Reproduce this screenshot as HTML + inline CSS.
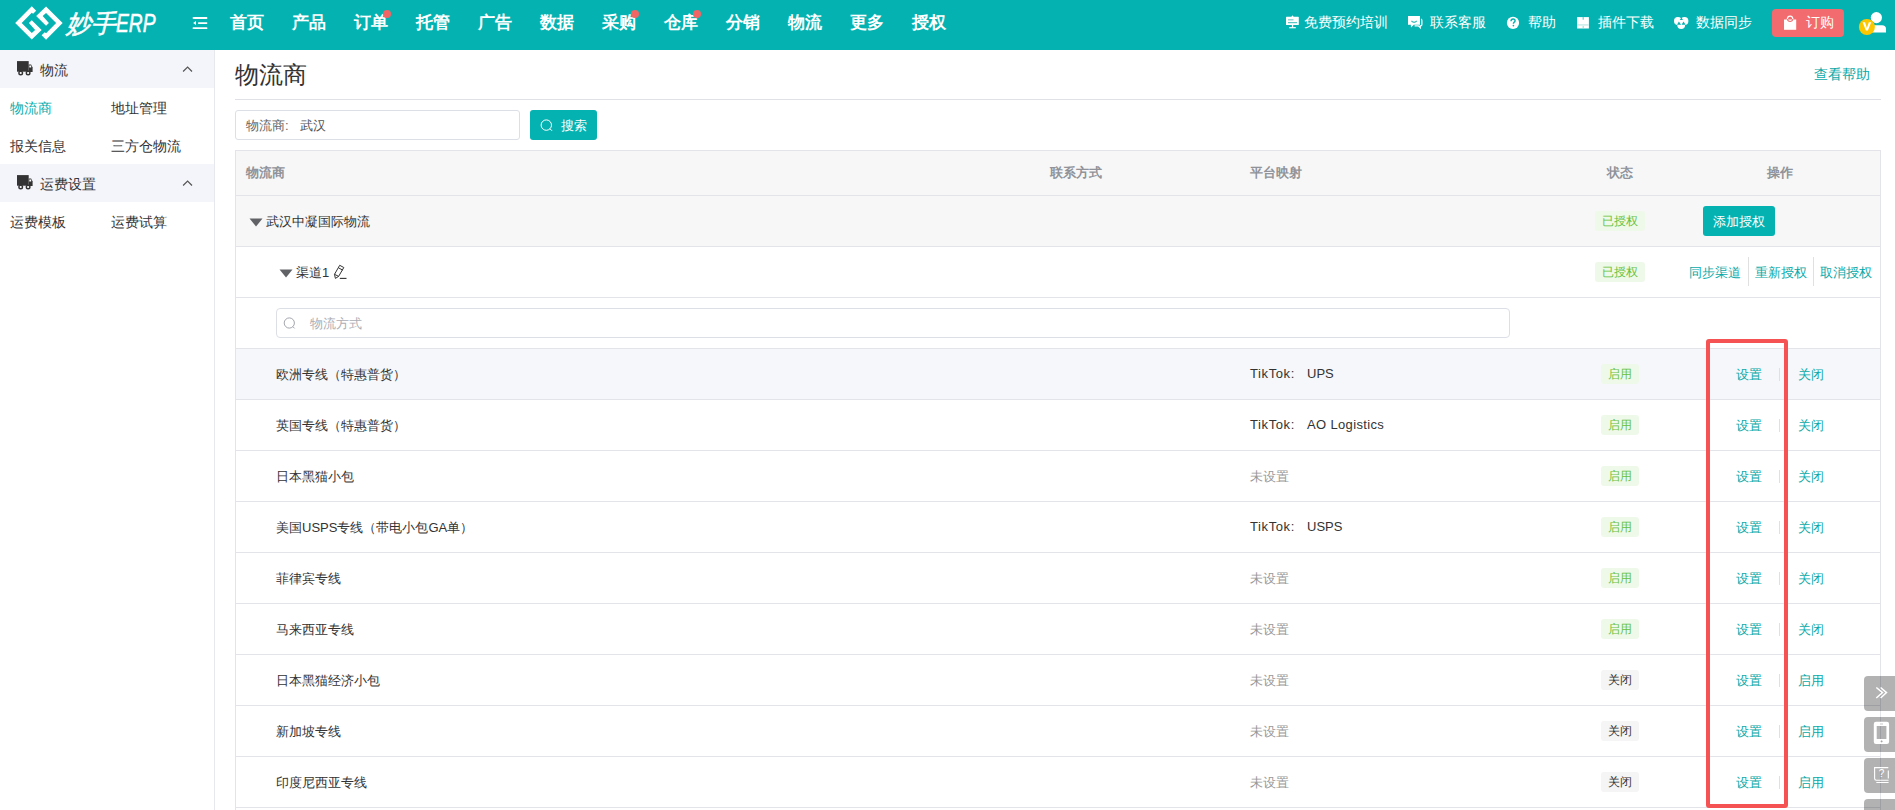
<!DOCTYPE html>
<html><head><meta charset="utf-8">
<style>
*{box-sizing:border-box;margin:0;padding:0}
html,body{width:1895px;height:810px;overflow:hidden;background:#fff;font-family:"Liberation Sans",sans-serif;color:#333;font-size:13px}
.abs{position:absolute}
#hdr{position:absolute;left:0;top:0;width:1895px;height:50px;background:#04B3B1}
.nav{position:absolute;top:0;height:50px;line-height:46px;font-size:17px;font-weight:bold;color:#fff;white-space:nowrap}
.dot{position:absolute;width:8px;height:8px;border-radius:50%;background:#F26565}
.hr{position:absolute;top:0;height:46px;line-height:44px;font-size:14px;color:#fff;white-space:nowrap}
#side svg{z-index:2}
#side{position:absolute;left:0;top:50px;width:215px;height:760px;background:#fff;border-right:1px solid #E6E8EE}
.sh{position:absolute;left:0;width:214px;background:#F4F5FA;font-size:14px;color:#333}
.si{position:absolute;font-size:14px;color:#333;white-space:nowrap}
.t{position:absolute;white-space:nowrap}
.row{position:absolute;left:235px;width:1646px;border-left:1px solid #E4E6EC;border-right:1px solid #E4E6EC;border-bottom:1px solid #E4E6EC}
.tag{position:absolute;height:21px;line-height:21px;font-size:12px;border-radius:3px;text-align:center}
.tg{background:#EFF9EA;color:#67C23A}
.tc{background:#F5F5F5;color:#333}
.th{font-weight:bold;color:#909399}
.lnk{position:absolute;color:#09A9A8;font-size:13px;white-space:nowrap}
.sep{position:absolute;width:1px;height:14px;background:#E0E0E0}
</style></head><body>
<div id="hdr">
  <svg class="abs" style="left:0;top:0" width="70" height="50" viewBox="0 0 70 50">
    <g fill="#fff">
      <polygon id="lg" points="31.78,6.15 36.19,10.82 33.08,13.83 31.78,12.63 21.67,23.01 31.78,33.12 35.16,30 28.93,23.01 31.78,20.15 41.64,30 31.78,39.6 15.19,23.01"/>
      <polygon transform="rotate(180 38.915 23)" points="31.78,6.15 36.19,10.82 33.08,13.83 31.78,12.63 21.67,23.01 31.78,33.12 35.16,30 28.93,23.01 31.78,20.15 41.64,30 31.78,39.6 15.19,23.01"/>
    </g>
  </svg>
  <div class="t" style="left:66px;top:6px;font-size:25px;font-style:italic;color:#fff;-webkit-text-stroke:0.5px #fff;line-height:34px">妙手<span style="display:inline-block;transform:scaleX(0.77);transform-origin:0 50%">ERP</span></div>
  <svg class="abs" style="left:190px;top:14px" width="20" height="18" viewBox="0 0 20 18">
    <rect x="2.6" y="3.1" width="14.8" height="1.9" rx="0.9" fill="#fff"/>
    <rect x="7.9" y="8.2" width="9.5" height="1.8" rx="0.9" fill="#fff"/>
    <polygon points="3.1,9.1 6,7.1 6,11.1" fill="#fff"/>
    <rect x="2.6" y="13.2" width="14.8" height="1.9" rx="0.9" fill="#fff"/>
  </svg>
  <div class="nav" style="left:230px">首页</div>
  <div class="nav" style="left:292px">产品</div>
  <div class="nav" style="left:354px">订单</div><div class="dot" style="left:383px;top:10px"></div>
  <div class="nav" style="left:416px">托管</div>
  <div class="nav" style="left:478px">广告</div>
  <div class="nav" style="left:540px">数据</div>
  <div class="nav" style="left:602px">采购</div><div class="dot" style="left:631px;top:10px"></div>
  <div class="nav" style="left:664px">仓库</div><div class="dot" style="left:693px;top:10px"></div>
  <div class="nav" style="left:726px">分销</div>
  <div class="nav" style="left:788px">物流</div>
  <div class="nav" style="left:850px">更多</div>
  <div class="nav" style="left:912px">授权</div>


  <svg class="abs" style="left:1284px;top:14px" width="17" height="16" viewBox="1284 14 17 16">
    <rect x="1286" y="16.8" width="12.8" height="8.2" rx="0.6" fill="#fff"/>
    <path d="M1291.3,17 L1292.5,15.2 L1293.7,17 Z" fill="#fff"/>
    <rect x="1288" y="19.2" width="5.5" height="1.2" fill="#7FCFCD"/>
    <rect x="1288" y="22" width="9" height="1.2" fill="#5CC4C2"/>
    <rect x="1291.9" y="24.8" width="1.3" height="2.8" fill="#fff"/>
    <rect x="1289.2" y="27.1" width="6.6" height="1.2" fill="#fff"/>
  </svg>
  <svg class="abs" style="left:1405px;top:14px" width="20" height="16" viewBox="1405 14 20 16">
    <path d="M1421,19.2 Q1421.9,19.4 1421.9,20.6 V24.6 Q1421.9,25.9 1420.6,25.9 H1420.2 L1420.3,27.8 L1418.3,25.9 H1414.6" fill="none" stroke="#fff" stroke-width="1.2"/>
    <path d="M1408,16.1 H1420 V24.8 H1413.8 L1411,27.6 L1410.8,24.8 H1408 Z" fill="#fff"/>
    <path d="M1411.4,21 Q1414.1,23.6 1416.8,21" fill="none" stroke="#3DBDBB" stroke-width="1.1"/>
  </svg>
  <svg class="abs" style="left:1505px;top:15px" width="16" height="16" viewBox="1505 15 16 16">
    <circle cx="1513" cy="22.9" r="6.1" fill="#fff"/>
    <path d="M1511,21.2 C1511,19.6 1512,19 1513.1,19 C1514.3,19 1515.1,19.8 1515.1,20.8 C1515.1,22 1513.4,22.2 1513.4,23.8" fill="none" stroke="#04B3B1" stroke-width="1.4"/>
    <circle cx="1513.4" cy="25.6" r="0.85" fill="#04B3B1"/>
  </svg>
  <svg class="abs" style="left:1575px;top:15px" width="16" height="16" viewBox="1575 15 16 16">
    <rect x="1577.1" y="17.1" width="11.8" height="11.4" fill="#fff"/>
    <rect x="1577.1" y="24.1" width="11.8" height="1.6" fill="#CDEDEC"/>
    <rect x="1582.7" y="17.1" width="0.9" height="2.6" fill="#38BEBC"/>
    <rect x="1582.7" y="26.2" width="0.9" height="1.6" fill="#60CCCA"/>
  </svg>
  <svg class="abs" style="left:1672px;top:14px" width="19" height="17" viewBox="1672 14 19 17">
    <circle cx="1677.9" cy="21" r="3.9" fill="#fff"/>
    <circle cx="1684.5" cy="21" r="3.9" fill="#fff"/>
    <circle cx="1681.2" cy="25.1" r="3.9" fill="#fff"/>
    <path d="M1681.4,17.6 L1683,20.1 H1679.8 Z M1678.9,21.4 L1681.1,24.7 H1677 Z M1683.6,21.4 L1685.5,24.7 H1681.5 Z" fill="#04B3B1"/>
  </svg>
  
  <svg class="abs" style="left:1856px;top:8px" width="36" height="34" viewBox="1856 8 36 34">
    <circle cx="1876.4" cy="17.6" r="5.6" fill="#fff"/>
    <path d="M1871,32.4 V27.5 C1871,26 1872,25.2 1874,25.2 H1882 C1884.5,25.2 1886,26.6 1886,28.8 V32.4 Z" fill="#fff"/>
    <circle cx="1866.9" cy="27" r="8" fill="#FDC700"/>
    <polygon points="1862.6,22.2 1865,22.2 1866.9,28 1868.8,22.2 1871.2,22.2 1867.9,30.6 1865.9,30.6" fill="#fff"/>
  </svg>
  <div class="hr" style="left:1304px">免费预约培训</div>
  <div class="hr" style="left:1430px">联系客服</div>
  <div class="hr" style="left:1528px">帮助</div>
  <div class="hr" style="left:1598px">插件下载</div>
  <div class="hr" style="left:1696px">数据同步</div>
  <div class="abs" style="left:1772px;top:9px;width:72px;height:28px;background:#F26B6E;border-radius:4px"></div>
  <svg class="abs" style="left:1782px;top:14px" width="16" height="17" viewBox="1782 14 16 17">
    <path d="M1784,19.5 H1796.2 V29.8 H1784 Z" fill="#fff"/>
    <path d="M1787.3,19.8 C1787.3,15 1792.9,15 1792.9,19.8" fill="none" stroke="#fff" stroke-width="1.3"/>
    <path d="M1787.4,19.2 C1788,22.3 1792.2,22.3 1792.8,19.2" fill="none" stroke="#F26D6F" stroke-width="1.1"/>
  </svg>
  <div class="hr" style="left:1806px;line-height:44px">订购</div>
</div>

<div id="side">
  <div class="sh" style="top:0;height:38px"></div>

  <svg class="abs" style="left:15px;top:10px" width="20" height="17" viewBox="15 60 20 17">
    <rect x="17" y="61.1" width="11.7" height="10.6" fill="#333"/>
    <path d="M28.7,64.6 H31.1 L32.6,67.6 V72 H28.7 Z" fill="#333"/>
    <rect x="29.3" y="65.5" width="1.9" height="2" fill="#fff"/>
    <circle cx="20.7" cy="73" r="2.5" fill="#333"/><circle cx="20.7" cy="73" r="1.1" fill="#fff"/>
    <circle cx="28.1" cy="73" r="2.5" fill="#333"/><circle cx="28.1" cy="73" r="1.1" fill="#fff"/>
  </svg>
  <svg class="abs" style="left:180px;top:12px" width="16" height="12" viewBox="180 62 16 12">
    <path d="M183.1,71.5 L187.6,67 L192,71.5" fill="none" stroke="#555" stroke-width="1.2"/>
  </svg>
  <svg class="abs" style="left:15px;top:124px" width="20" height="17" viewBox="15 60 20 17">
    <rect x="17" y="61.1" width="11.7" height="10.6" fill="#333"/>
    <path d="M28.7,64.6 H31.1 L32.6,67.6 V72 H28.7 Z" fill="#333"/>
    <rect x="29.3" y="65.5" width="1.9" height="2" fill="#fff"/>
    <circle cx="20.7" cy="73" r="2.5" fill="#333"/><circle cx="20.7" cy="73" r="1.1" fill="#fff"/>
    <circle cx="28.1" cy="73" r="2.5" fill="#333"/><circle cx="28.1" cy="73" r="1.1" fill="#fff"/>
  </svg>
  <svg class="abs" style="left:180px;top:126px" width="16" height="12" viewBox="180 62 16 12">
    <path d="M183.1,71.5 L187.6,67 L192,71.5" fill="none" stroke="#555" stroke-width="1.2"/>
  </svg>
  <div class="si" style="left:40px;top:12px">物流</div>
  <div class="si" style="left:10px;top:50px;color:#0AAEAE">物流商</div>
  <div class="si" style="left:111px;top:50px">地址管理</div>
  <div class="si" style="left:10px;top:88px">报关信息</div>
  <div class="si" style="left:111px;top:88px">三方仓物流</div>
  <div class="sh" style="top:114px;height:38px"></div>
  <div class="si" style="left:40px;top:126px">运费设置</div>
  <div class="si" style="left:10px;top:164px">运费模板</div>
  <div class="si" style="left:111px;top:164px">运费试算</div>
</div>

<div class="t" style="left:235px;top:59px;font-size:24px;color:#333">物流商</div>
<div class="lnk" style="left:1814px;top:66px;font-size:14px">查看帮助</div>
<div class="abs" style="left:235px;top:99px;width:1646px;height:1px;background:#DFE1E6"></div>
<div class="abs" style="left:235px;top:110px;width:285px;height:30px;border:1px solid #DCDFE6;border-radius:3px"></div>
<div class="t" style="left:246px;top:117px;color:#666">物流商:</div><div class="t" style="left:300px;top:117px;color:#555">武汉</div>
<div class="abs" style="left:530px;top:110px;width:67px;height:30px;background:#04B3B1;border-radius:3px"></div>
<svg class="abs" style="left:538px;top:117px" width="16" height="16" viewBox="538 117 16 16"><circle cx="546.3" cy="125.1" r="5.2" fill="none" stroke="#fff" stroke-width="1"/><path d="M549.9,128.7 L552,130.8" stroke="#fff" stroke-width="1"/></svg>
<div class="t" style="left:561px;top:117px;color:#fff">搜索</div>

<!-- table -->
<div class="abs" style="left:235px;top:150px;width:1646px;height:46px;background:#F7F7F7"></div>
<div class="abs" style="left:235px;top:196px;width:1646px;height:50px;background:#F7F7F7"></div>
<div class="abs" style="left:235px;top:348px;width:1646px;height:51px;background:#F5F7FA"></div>
<div class="abs" style="left:235px;top:150px;width:1px;height:660px;background:#E2E4EA"></div>
<div class="abs" style="left:1880px;top:150px;width:1px;height:660px;background:#E2E4EA"></div>
<div class="abs" style="left:235px;top:150px;width:1646px;height:1px;background:#E2E4EA"></div>
<div class="abs" style="left:235px;top:195px;width:1646px;height:1px;background:#E2E4EA"></div>
<div class="abs" style="left:235px;top:246px;width:1646px;height:1px;background:#E2E4EA"></div>
<div class="abs" style="left:235px;top:297px;width:1646px;height:1px;background:#E2E4EA"></div>
<div class="abs" style="left:235px;top:348px;width:1646px;height:1px;background:#E2E4EA"></div>
<div class="abs" style="left:235px;top:399px;width:1646px;height:1px;background:#E2E4EA"></div>
<div class="abs" style="left:235px;top:450px;width:1646px;height:1px;background:#E2E4EA"></div>
<div class="abs" style="left:235px;top:501px;width:1646px;height:1px;background:#E2E4EA"></div>
<div class="abs" style="left:235px;top:552px;width:1646px;height:1px;background:#E2E4EA"></div>
<div class="abs" style="left:235px;top:603px;width:1646px;height:1px;background:#E2E4EA"></div>
<div class="abs" style="left:235px;top:654px;width:1646px;height:1px;background:#E2E4EA"></div>
<div class="abs" style="left:235px;top:705px;width:1646px;height:1px;background:#E2E4EA"></div>
<div class="abs" style="left:235px;top:756px;width:1646px;height:1px;background:#E2E4EA"></div>
<div class="abs" style="left:235px;top:807px;width:1646px;height:1px;background:#E2E4EA"></div>
<div class="t th" style="left:246px;top:164px">物流商</div>
<div class="t th" style="left:1050px;top:164px">联系方式</div>
<div class="t th" style="left:1250px;top:164px">平台映射</div>
<div class="t th" style="left:1607px;top:164px">状态</div>
<div class="t th" style="left:1767px;top:164px">操作</div>
<svg class="abs" style="left:249px;top:218px" width="14" height="9" viewBox="0 0 14 9"><polygon points="0.5,0.5 13.5,0.5 7,8.5" fill="#606266"/></svg>
<div class="t" style="left:266px;top:213px">武汉中凝国际物流</div>
<div class="tag tg" style="left:1595px;top:211px;width:50px;height:20px;line-height:20px">已授权</div>
<div class="abs" style="left:1703px;top:206px;width:72px;height:30px;background:#04B3B1;border-radius:3px"></div>
<div class="t" style="left:1713px;top:213px;color:#fff">添加授权</div>
<svg class="abs" style="left:279px;top:269px" width="14" height="9" viewBox="0 0 14 9"><polygon points="0.5,0.5 13.5,0.5 7,8.5" fill="#606266"/></svg>
<div class="t" style="left:296px;top:264px">渠道1</div>
<svg class="abs" style="left:328px;top:260px" width="24" height="24" viewBox="328 260 24 24"><path d="M339.7,265.3 L343.8,267.5 L338.6,276.4 L335.4,278.4 L334.5,274.3 Z M338.6,267.9 L342.7,270.1 M334.5,274.3 L338.6,276.4" fill="none" stroke="#333" stroke-width="1" stroke-linejoin="round"/><path d="M339.8,278.4 H346.5" stroke="#333" stroke-width="1.1"/></svg>
<div class="tag tg" style="left:1595px;top:262px;width:50px;height:20px;line-height:20px">已授权</div>
<div class="lnk" style="left:1689px;top:264px">同步渠道</div>
<div class="sep" style="left:1748px;top:257px;height:29px"></div>
<div class="lnk" style="left:1755px;top:264px">重新授权</div>
<div class="sep" style="left:1813px;top:257px;height:29px"></div>
<div class="lnk" style="left:1820px;top:264px">取消授权</div>
<div class="abs" style="left:276px;top:308px;width:1234px;height:30px;border:1px solid #DCDFE6;border-radius:4px;background:#fff"></div>
<svg class="abs" style="left:283px;top:317px" width="14" height="14" viewBox="0 0 14 14"><circle cx="6.3" cy="6" r="5.1" fill="none" stroke="#A3A6AD" stroke-width="1"/><path d="M9.8,9.6 L11.6,11.4" stroke="#A3A6AD" stroke-width="1"/></svg>
<div class="t" style="left:310px;top:315px;color:#ABAEB5">物流方式</div>
<div class="t" style="left:276px;top:366px">欧洲专线（特惠普货）</div>
<div class="t" style="left:1250px;top:366px;letter-spacing:0.6px">TikTok:</div>
<div class="t" style="left:1307px;top:366px;letter-spacing:0">UPS</div>
<div class="tag tg" style="left:1601px;top:364px;width:38px;height:20px;line-height:20px">启用</div>
<div class="lnk" style="left:1736px;top:366px">设置</div>
<div class="sep" style="left:1779px;top:368px;height:13px"></div>
<div class="lnk" style="left:1798px;top:366px">关闭</div>
<div class="t" style="left:276px;top:417px">英国专线（特惠普货）</div>
<div class="t" style="left:1250px;top:417px;letter-spacing:0.6px">TikTok:</div>
<div class="t" style="left:1307px;top:417px;letter-spacing:0.35px">AO Logistics</div>
<div class="tag tg" style="left:1601px;top:415px;width:38px;height:20px;line-height:20px">启用</div>
<div class="lnk" style="left:1736px;top:417px">设置</div>
<div class="sep" style="left:1779px;top:419px;height:13px"></div>
<div class="lnk" style="left:1798px;top:417px">关闭</div>
<div class="t" style="left:276px;top:468px">日本黑猫小包</div>
<div class="t" style="left:1250px;top:468px;color:#999">未设置</div>
<div class="tag tg" style="left:1601px;top:466px;width:38px;height:20px;line-height:20px">启用</div>
<div class="lnk" style="left:1736px;top:468px">设置</div>
<div class="sep" style="left:1779px;top:470px;height:13px"></div>
<div class="lnk" style="left:1798px;top:468px">关闭</div>
<div class="t" style="left:276px;top:519px">美国USPS专线（带电小包GA单）</div>
<div class="t" style="left:1250px;top:519px;letter-spacing:0.6px">TikTok:</div>
<div class="t" style="left:1307px;top:519px;letter-spacing:0">USPS</div>
<div class="tag tg" style="left:1601px;top:517px;width:38px;height:20px;line-height:20px">启用</div>
<div class="lnk" style="left:1736px;top:519px">设置</div>
<div class="sep" style="left:1779px;top:521px;height:13px"></div>
<div class="lnk" style="left:1798px;top:519px">关闭</div>
<div class="t" style="left:276px;top:570px">菲律宾专线</div>
<div class="t" style="left:1250px;top:570px;color:#999">未设置</div>
<div class="tag tg" style="left:1601px;top:568px;width:38px;height:20px;line-height:20px">启用</div>
<div class="lnk" style="left:1736px;top:570px">设置</div>
<div class="sep" style="left:1779px;top:572px;height:13px"></div>
<div class="lnk" style="left:1798px;top:570px">关闭</div>
<div class="t" style="left:276px;top:621px">马来西亚专线</div>
<div class="t" style="left:1250px;top:621px;color:#999">未设置</div>
<div class="tag tg" style="left:1601px;top:619px;width:38px;height:20px;line-height:20px">启用</div>
<div class="lnk" style="left:1736px;top:621px">设置</div>
<div class="sep" style="left:1779px;top:623px;height:13px"></div>
<div class="lnk" style="left:1798px;top:621px">关闭</div>
<div class="t" style="left:276px;top:672px">日本黑猫经济小包</div>
<div class="t" style="left:1250px;top:672px;color:#999">未设置</div>
<div class="tag tc" style="left:1601px;top:670px;width:38px;height:20px;line-height:20px">关闭</div>
<div class="lnk" style="left:1736px;top:672px">设置</div>
<div class="sep" style="left:1779px;top:674px;height:13px"></div>
<div class="lnk" style="left:1798px;top:672px">启用</div>
<div class="t" style="left:276px;top:723px">新加坡专线</div>
<div class="t" style="left:1250px;top:723px;color:#999">未设置</div>
<div class="tag tc" style="left:1601px;top:721px;width:38px;height:20px;line-height:20px">关闭</div>
<div class="lnk" style="left:1736px;top:723px">设置</div>
<div class="sep" style="left:1779px;top:725px;height:13px"></div>
<div class="lnk" style="left:1798px;top:723px">启用</div>
<div class="t" style="left:276px;top:774px">印度尼西亚专线</div>
<div class="t" style="left:1250px;top:774px;color:#999">未设置</div>
<div class="tag tc" style="left:1601px;top:772px;width:38px;height:20px;line-height:20px">关闭</div>
<div class="lnk" style="left:1736px;top:774px">设置</div>
<div class="sep" style="left:1779px;top:776px;height:13px"></div>
<div class="lnk" style="left:1798px;top:774px">启用</div>
<div class="abs" style="left:1706px;top:339px;width:82px;height:469px;border:4px solid #F55253;border-radius:3px"></div>
<div class="abs" style="left:1864px;top:676px;width:36px;height:35px;background:rgba(0,0,0,0.3);border-radius:4px"></div>
<div class="abs" style="left:1864px;top:717px;width:36px;height:35px;background:rgba(0,0,0,0.3);border-radius:4px"></div>
<div class="abs" style="left:1864px;top:758px;width:36px;height:35px;background:rgba(0,0,0,0.3);border-radius:4px"></div>
<div class="abs" style="left:1864px;top:799px;width:36px;height:35px;background:rgba(0,0,0,0.3);border-radius:4px"></div>
<svg class="abs" style="left:1874px;top:685px" width="15" height="15" viewBox="0 0 15 15"><path d="M2.3,2.5 L8.5,7.6 L2.3,13 M6.6,2.5 L12.5,7.6 L6.6,13" fill="none" stroke="#fff" stroke-width="1.5"/></svg>
<svg class="abs" style="left:1870px;top:718px" width="24" height="30" viewBox="1870 718 24 30"><path fill-rule="evenodd" d="M1873.8,724 a2.2,2.2 0 0 1 2.2,-2.2 h10.9 a2.2,2.2 0 0 1 2.2,2.2 v17.7 a2.2,2.2 0 0 1 -2.2,2.2 h-10.9 a2.2,2.2 0 0 1 -2.2,-2.2 Z M1876.7,726 V739 H1886.4 V726 Z" fill="#fff"/><rect x="1880" y="723.6" width="3" height="0.8" fill="#BBB"/><path d="M1880.6,741.4 H1882.6 M1881.6,740.4 V742.4" stroke="#999" stroke-width="0.8"/></svg>
<svg class="abs" style="left:1870px;top:764px" width="24" height="22" viewBox="1870 764 24 22"><path d="M1874.6,778.6 V767.6 H1888.3 M1888.3,770.5 V778.6 M1874.6,778.6 Q1874.6,780.3 1876.3,780.3 H1888.6 M1876.3,782.5 H1888.6" fill="none" stroke="#fff" stroke-width="1.1"/><text x="1881.5" y="776.6" font-size="10" text-anchor="middle" fill="#fff" font-family="Liberation Sans">?</text></svg>
</body></html>
